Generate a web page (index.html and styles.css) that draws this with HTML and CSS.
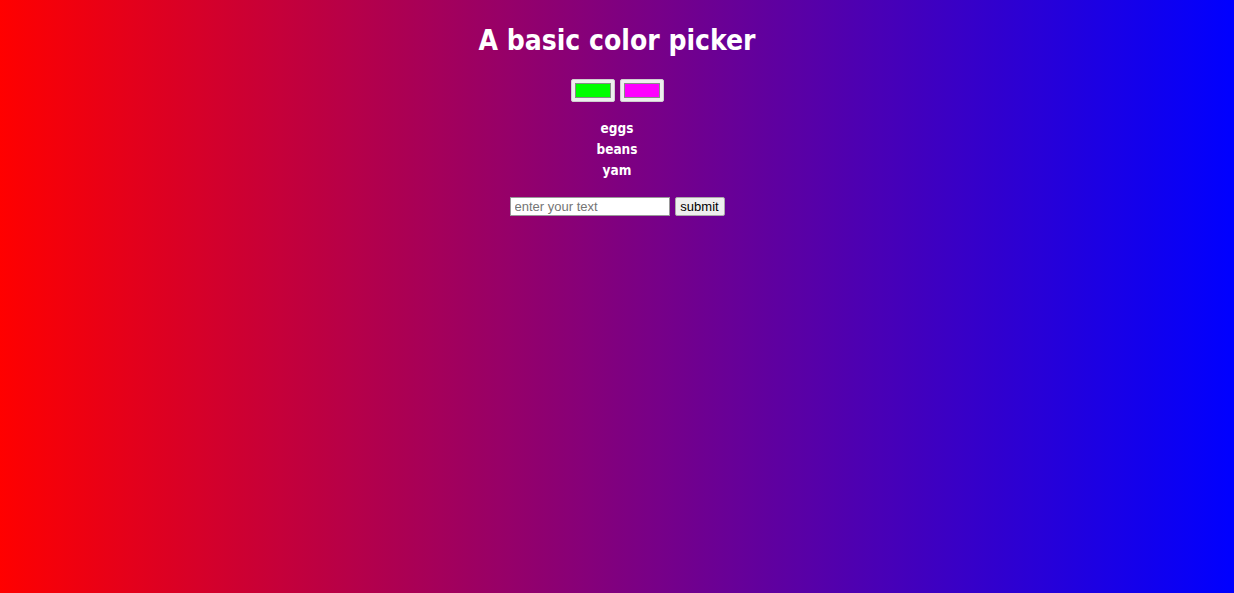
FILE: index.html
```html
<!DOCTYPE html>
<html>
<head>
<meta charset="utf-8">
<title>Color picker</title>
<link rel="stylesheet" href="styles.css">
</head>
<body>
<h1 class="title">A basic color picker</h1>
<div class="pickers">
  <input class="picker" type="color" value="#00ff00">
  <input class="picker" type="color" value="#ff00ff">
</div>
<ul class="items">
  <li>eggs</li>
  <li>beans</li>
  <li>yam</li>
</ul>
<form class="entry">
  <input class="text" type="text" placeholder="enter your text">
  <button class="submit" type="button">submit</button>
</form>
</body>
</html>
```
FILE: styles.css
```css
html {
  height: 100%;
}
body {
  margin: 0;
  min-height: 100%;
  background: linear-gradient(to right, #ff0000, #0000ff);
  font-family: "Comic Sans MS", "DejaVu Sans Condensed", "DejaVu Sans", sans-serif;
  color: #fff;
  text-align: center;
}
.title {
  margin: 0;
  padding-top: 22px;
  font-size: 28px;
  line-height: 38px;
  font-weight: bold;
}
.pickers {
  display: flex;
  justify-content: center;
  gap: 5px;
  margin-top: 19px;
}
.picker {
  width: 44px;
  height: 23px;
  padding: 3px;
  margin: 0;
  border: 1px solid #cfcfcf;
  background: #efefef;
  border-radius: 2px;
  box-sizing: border-box;
}
.picker::-webkit-color-swatch-wrapper {
  padding: 0;
}
.picker::-webkit-color-swatch {
  border: 1px solid #8a8a8a;
  border-radius: 0;
}
.items {
  list-style: none;
  padding: 0;
  margin: 16px 0 0;
  font-size: 13.5px;
  font-weight: bold;
  line-height: 21px;
}
.entry {
  display: flex;
  justify-content: center;
  gap: 5px;
  margin-top: 16px;
}
.text {
  width: 160px;
  height: 19px;
  box-sizing: border-box;
  margin: 0;
  padding: 1px 4px;
  border: 1px solid #999;
  font-family: "Liberation Sans", Arial, sans-serif;
  font-size: 13px;
  background: #fff;
}
.submit {
  width: 50px;
  height: 19px;
  box-sizing: border-box;
  margin: 0;
  padding: 0;
  font-family: "Liberation Sans", Arial, sans-serif;
  font-size: 13px;
  color: #000;
  background: #efefef;
  border: 1px solid #aaa;
  border-radius: 2px;
}
```
